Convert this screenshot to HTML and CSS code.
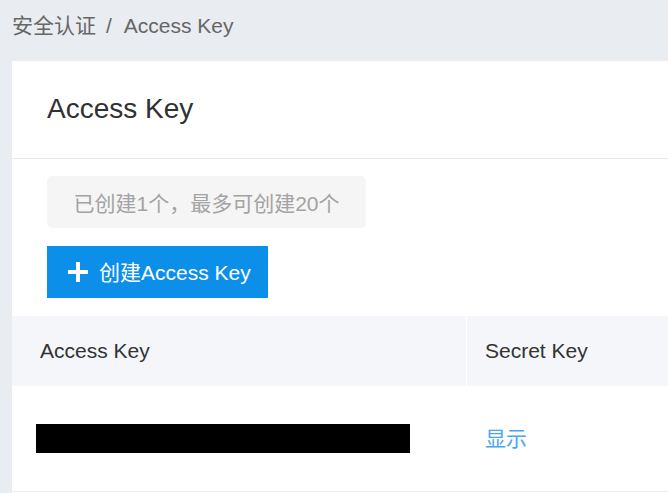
FILE: index.html
```html
<!DOCTYPE html>
<html lang="zh">
<head>
<meta charset="utf-8">
<link rel="stylesheet" href="styles.css">
</head>
<body>
<div class="breadcrumb"><span class="crumb">安全认证</span><span class="sep">/</span><span class="crumb current">Access Key</span></div>
<div class="card">
  <div class="card-header"><h1 class="title">Access Key</h1></div>
  <div class="card-body">
    <div class="quota">已创建1个，最多可创建20个</div>
    <button class="btn-create"><svg class="plus" width="22" height="22" viewBox="0 0 22 22"><path d="M11 1v20M1 11h20" stroke="#fff" stroke-width="4" fill="none"/></svg><span class="btn-label">创建Access Key</span></button>
  </div>
  <div class="table">
    <div class="row head">
      <div class="cell c1">Access Key</div>
      <div class="cell c2">Secret Key</div>
    </div>
    <div class="row body">
      <div class="cell c1"><div class="redact"></div></div>
      <div class="cell c2"><a class="link">显示</a></div>
    </div>
  </div>
</div>
</body>
</html>
```
FILE: styles.css
```css
* { box-sizing: border-box; }
html, body { margin: 0; padding: 0; }
body {
  background: #e9ecf0;
  font-family: "Liberation Sans", "Noto Sans CJK SC", sans-serif;
  font-size: 21px;
  width: 668px;
  height: 493px;
  overflow: hidden;
}
.breadcrumb {
  height: 61px;
  padding: 13px 0 0 12px;
  color: #666;
  line-height: 26px;
  display: flex;
}
.sep { margin: 0 12px 0 10px; color: #666; }
.crumb.current { color: #666; }
.card {
  margin-left: 12px;
  background: #fff;
  height: 432px;
}
.card-header {
  height: 98px;
  border-bottom: 1px solid #e8eaee;
  padding: 0 0 0 35px;
  display: flex;
  align-items: center;
}
.title {
  margin: 0;
  font-weight: normal;
  font-size: 28px;
  color: #303133;
  position: relative;
  top: -1px;
}
.card-body {
  padding: 17px 0 18px 35px;
  display: flex;
  flex-direction: column;
  align-items: flex-start;
  gap: 18px;
}
.quota {
  width: 319px;
  height: 52px;
  background: #f5f5f5;
  border-radius: 5px;
  color: #a3a3a3;
  display: flex;
  align-items: center;
  justify-content: center;
}
.btn-create {
  width: 221px;
  height: 52px;
  border: none;
  background: #0b8fe9;
  color: #fff;
  font: inherit;
  display: flex;
  align-items: center;
  padding: 0 0 3px 20px;
  gap: 10px;
}
.plus { display: block; position: relative; top: 1px; }
.table { width: 100%; }
.row { display: flex; }
.row.head { height: 70px; background: #f4f6f9; color: #333; }
.row.body { height: 106px; border-bottom: 1px solid #ebedf2; }
.cell { display: flex; align-items: center; }
.c1 { width: 454px; padding-left: 28px; }
.head .c2 { border-left: 1px solid #fff; padding-left: 18px; }
.c2 { flex: 1; }
.body .c1 { padding-left: 24px; }
.body .c2 { padding-left: 19px; padding-bottom: 4px; }
.redact { width: 374px; height: 29px; background: #000; }
.link { color: #4aa6f2; cursor: pointer; }
```
